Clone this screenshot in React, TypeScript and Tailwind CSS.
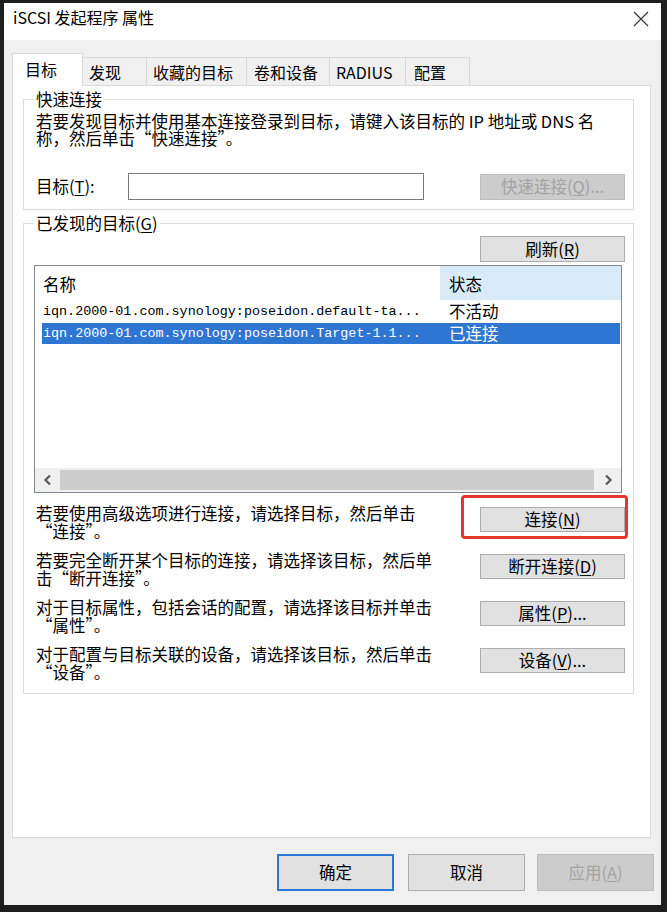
import React from "react";

const U = ({ c }: { c: string }) => (
  <span className="underline underline-offset-[2px] decoration-1">{c}</span>
);

function Btn({
  children,
  className = "",
}: {
  children: React.ReactNode;
  className?: string;
}) {
  return (
    <div
      className={
        "flex items-center justify-center border border-[#adadad] bg-[#e1e1e1] text-[16.5px] leading-none text-black " +
        className
      }
    >
      {children}
    </div>
  );
}

function Chevron({ dir }: { dir: "l" | "r" }) {
  return (
    <svg width="10" height="12" viewBox="0 0 10 12">
      <path
        d={dir === "l" ? "M7 1.5 L2.5 6 L7 10.5" : "M3 1.5 L7.5 6 L3 10.5"}
        fill="none"
        stroke="#5a5a5a"
        strokeWidth="2.2"
      />
    </svg>
  );
}

function ActionRow({
  l1,
  l2,
  btn,
  highlight = false,
}: {
  l1: string;
  l2: string;
  btn: React.ReactNode;
  highlight?: boolean;
}) {
  return (
    <div className="flex justify-between items-start h-[36px]">
      <div className="pl-[12px] text-[16.5px] leading-[18px] whitespace-nowrap">
        <div>{l1}</div>
        <div>{l2}</div>
      </div>
      <div className="relative mt-[3px] mr-[8px]">
        <Btn className="w-[145px] h-[25px]">{btn}</Btn>
        {highlight && (
          <div className="absolute left-[-19px] right-[-3px] top-[-12px] bottom-[-7px] border-[3px] border-[#e2392c] rounded-[4px]" />
        )}
      </div>
    </div>
  );
}

export default function App() {
  return (
    <div className="w-[667px] h-[912px] bg-[#1e1e1e] pt-[3px] pl-[4px] overflow-hidden font-['Noto_Sans_CJK_SC',sans-serif] text-black">
      <div className="w-[657px] h-[902px] bg-[#f0f0f0] flex flex-col">
        {/* Title bar */}
        <div className="h-[37px] bg-white flex items-start justify-between pl-[9px] pr-[12px] pt-[6px] shrink-0">
          <span className="text-[16px] leading-[17px]">iSCSI 发起程序 属性</span>
          <svg width="16" height="16" viewBox="0 0 16 16" className="mt-[2px]">
            <path d="M1 1L15 15M15 1L1 15" stroke="#333" strokeWidth="1.1" />
          </svg>
        </div>

        <div className="px-[8px] pt-[13px]">
          {/* Tabs */}
          <div className="flex items-end h-[32px] text-[16px] leading-none">
            <div className="relative z-10 -mb-px w-[71px] h-[33px] bg-white border border-b-0 border-[#d9d9d9] flex items-center pl-[12px] pb-[2px]">
              目标
            </div>
            <div className="w-[64px] h-[28px] border border-l-0 border-b-0 border-[#d9d9d9] flex items-center pl-[6px]">
              发现
            </div>
            <div className="w-[100px] h-[28px] border border-l-0 border-b-0 border-[#d9d9d9] flex items-center pl-[6px]">
              收藏的目标
            </div>
            <div className="w-[83px] h-[28px] border border-l-0 border-b-0 border-[#d9d9d9] flex items-center pl-[7px]">
              卷和设备
            </div>
            <div className="w-[76px] h-[28px] border border-l-0 border-b-0 border-[#d9d9d9] flex items-center pl-[6px]">
              RADIUS
            </div>
            <div className="w-[64px] h-[28px] border border-l-0 border-b-0 border-[#d9d9d9] flex items-center pl-[8px]">
              配置
            </div>
          </div>

          {/* Panel */}
          <div className="w-[639px] h-[753px] bg-white border border-[#d9d9d9] flex flex-col">
            {/* Quick connect group */}
            <div className="mt-[13px] ml-[10px] w-[611px] border border-[#dcdcdc] flex flex-col pb-[9px]">
              <div className="-mt-[10px] ml-[10px] px-[2px] bg-white w-fit text-[16.5px] leading-[18px]">
                快速连接
              </div>
              <div className="mt-[5px] pl-[12px] text-[16.5px] leading-[17px] whitespace-nowrap">
                <div>若要发现目标并使用基本连接登录到目标，请键入该目标的 IP 地址或 DNS 名</div>
                <div>称，然后单击“快速连接”。</div>
              </div>
              <div className="mt-[26px] flex items-center">
                <div className="pl-[12px] w-[104px] text-[16.5px] leading-none">
                  目标(<U c="T" />):
                </div>
                <div className="w-[296px] h-[27px] border border-[#7a7a7a] bg-white" />
                <Btn className="ml-[56px] w-[145px] h-[26px] !bg-[#cccccc] !border-[#bfbfbf] !text-[#a3a3a3]">
                  快速连接(<U c="Q" />)...
                </Btn>
              </div>
            </div>

            {/* Discovered targets group */}
            <div className="mt-[13px] ml-[10px] w-[611px] border border-[#dcdcdc] flex flex-col pb-[12px]">
              <div className="-mt-[10px] ml-[10px] px-[2px] bg-white w-fit text-[16.5px] leading-[18px]">
                已发现的目标(<U c="G" />)
              </div>
              <Btn className="self-end mr-[8px] mt-[4px] w-[145px] h-[26px]">
                刷新(<U c="R" />)
              </Btn>

              {/* List box */}
              <div className="mt-[3px] ml-[10px] w-[588px] h-[228px] border border-[#828790] bg-white flex flex-col">
                <div className="flex h-[34px] text-[16.5px] leading-none">
                  <div className="w-[405px] flex items-center pl-[8px] pt-[3px]">名称</div>
                  <div className="flex-1 bg-[#d9ebf9] flex items-center pl-[9px] pt-[3px]">状态</div>
                </div>
                <div className="mt-px ml-[7px] w-[578px] h-[21px] flex items-center">
                  <div className="w-[398px] pl-[1px] font-['Liberation_Mono',monospace] text-[13.4px] leading-none whitespace-nowrap">
                    iqn.2000-01.com.synology:poseidon.default-ta...
                  </div>
                  <div className="pl-[9px] text-[16.5px] leading-none">不活动</div>
                </div>
                <div className="mt-px ml-[7px] w-[578px] h-[21px] flex items-center bg-[#2f76d2] text-white">
                  <div className="w-[398px] pl-[1px] font-['Liberation_Mono',monospace] text-[13.4px] leading-none whitespace-nowrap">
                    iqn.2000-01.com.synology:poseidon.Target-1.1...
                  </div>
                  <div className="pl-[9px] text-[16.5px] leading-none">已连接</div>
                </div>
                <div className="flex-1" />
                <div className="h-[24px] flex items-center bg-[#f0f0f0]">
                  <div className="w-[25px] flex justify-center">
                    <Chevron dir="l" />
                  </div>
                  <div className="w-[534px] h-[20px] bg-[#cdcdcd]" />
                  <div className="w-[27px] flex justify-center">
                    <Chevron dir="r" />
                  </div>
                </div>
              </div>

              {/* Action rows */}
              <div className="mt-[11px] flex flex-col gap-[11px]">
                <ActionRow
                  l1="若要使用高级选项进行连接，请选择目标，然后单击"
                  l2="“连接”。"
                  btn={<>连接(<U c="N" />)</>}
                  highlight
                />
                <ActionRow
                  l1="若要完全断开某个目标的连接，请选择该目标，然后单"
                  l2="击“断开连接”。"
                  btn={<>断开连接(<U c="D" />)</>}
                />
                <ActionRow
                  l1="对于目标属性，包括会话的配置，请选择该目标并单击"
                  l2="“属性”。"
                  btn={<>属性(<U c="P" />)...</>}
                />
                <ActionRow
                  l1="对于配置与目标关联的设备，请选择该目标，然后单击"
                  l2="“设备”。"
                  btn={<>设备(<U c="V" />)...</>}
                />
              </div>
            </div>
          </div>
        </div>

        {/* Bottom buttons */}
        <div className="mt-[16px] flex justify-end pr-[7px]">
          <Btn className="w-[117px] h-[37px] !border-2 !border-[#2b78d4]">确定</Btn>
          <Btn className="ml-[14px] w-[117px] h-[37px]">取消</Btn>
          <Btn className="ml-[12px] w-[117px] h-[37px] !bg-[#cccccc] !border-[#bfbfbf] !text-[#a3a3a3]">
            应用(<U c="A" />)
          </Btn>
        </div>
      </div>
    </div>
  );
}
